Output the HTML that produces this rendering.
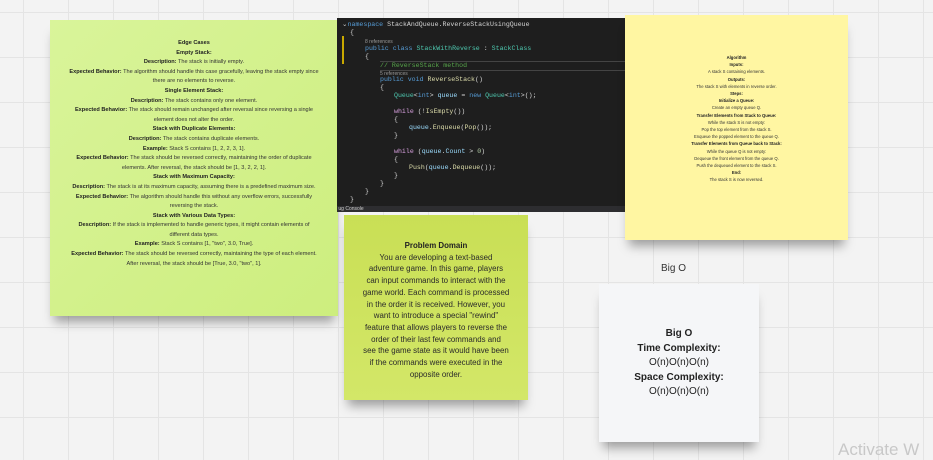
<!DOCTYPE html>
<html><head><meta charset="utf-8"><style>
body{margin:0;width:933px;height:454px;overflow:hidden;position:relative;font-family:"Liberation Sans","DejaVu Sans",sans-serif;
background-color:#f3f3f3;
background-image:linear-gradient(#e4e4e4 1px,transparent 1px),linear-gradient(90deg,#e4e4e4 1px,transparent 1px);
background-size:45px 45px;background-position:23px 12px;}
.note{position:absolute;box-shadow:0 10px 10px -4px rgba(0,0,0,.35);text-align:center;color:#333;}
.g{left:50px;top:20px;width:288px;height:296px;background:linear-gradient(135deg,#d9f49a,#cdee7e);font-size:5.6px;line-height:9.6px;}
.g .in{position:absolute;top:19px;left:19px;right:19px;}
b{color:#222}
.code{position:absolute;left:337px;top:18px;width:288px;height:194px;background:#1e1e1e;font-family:"Liberation Mono",monospace;font-size:6.6px;line-height:8.1px;color:#9cdcfe;white-space:pre;}
.code .l{position:absolute;left:0;}
.k{color:#569cd6}.t{color:#4ec9b0}.c{color:#57a64a}.p{color:#d8a0df}.f{color:#dcdcaa}.w{color:#d4d4d4}.n{color:#b5cea8}.r{color:#999;font-size:5px;font-family:"Liberation Sans",sans-serif}
.y{left:625px;top:15px;width:223px;height:225px;background:#fff6a2;font-size:4.2px;line-height:7.2px;}
.y .in{position:absolute;top:39px;left:0;right:0}
.pd{left:344px;top:215px;width:184px;height:185px;background:linear-gradient(180deg,#c9df55,#d3e768);font-size:7.9px;line-height:11.7px;color:#2a2a2a;white-space:nowrap}
.bo{left:599px;top:284px;width:160px;height:158px;background:#f5f6f8;font-size:10px;line-height:14.5px;color:#222}
</style></head><body>
<div class="note g"><div class="in">
<b>Edge Cases</b><br><b>Empty Stack:</b><br><b>Description:</b> The stack is initially empty.<br><b>Expected Behavior:</b> The algorithm should handle this case gracefully, leaving the stack empty since there are no elements to reverse.<br><b>Single Element Stack:</b><br><b>Description:</b> The stack contains only one element.<br><b>Expected Behavior:</b> The stack should remain unchanged after reversal since reversing a single element does not alter the order.<br><b>Stack with Duplicate Elements:</b><br><b>Description:</b> The stack contains duplicate elements.<br><b>Example:</b> Stack S contains [1, 2, 2, 3, 1].<br><b>Expected Behavior:</b> The stack should be reversed correctly, maintaining the order of duplicate elements. After reversal, the stack should be [1, 3, 2, 2, 1].<br><b>Stack with Maximum Capacity:</b><br><b>Description:</b> The stack is at its maximum capacity, assuming there is a predefined maximum size.<br><b>Expected Behavior:</b> The algorithm should handle this without any overflow errors, successfully reversing the stack.<br><b>Stack with Various Data Types:</b><br><b>Description:</b> If the stack is implemented to handle generic types, it might contain elements of different data types.<br><b>Example:</b> Stack S contains [1, "two", 3.0, True].<br><b>Expected Behavior:</b> The stack should be reversed correctly, maintaining the type of each element. After reversal, the stack should be [True, 3.0, "two", 1].
</div></div>
<div class="code">
<div class="l" style="top:3px;left:5px"><span class="w">⌄</span><span class="k">namespace</span> <span class="w">StackAndQueue.ReverseStackUsingQueue</span></div>
<div class="l w" style="top:11px;left:13px">{</div>
<div class="l r" style="top:20px;left:28px">8 references</div>
<div class="l" style="top:27px;left:28px"><span class="k">public class</span> <span class="t">StackWithReverse</span> <span class="w">:</span> <span class="t">StackClass</span></div>
<div class="l w" style="top:35px;left:28px">{</div>
<div class="l c" style="top:43px;left:43px;width:245px;border:1px solid #444;border-left:none;border-right:none">// ReverseStack method</div>
<div class="l r" style="top:52px;left:43px">5 references</div>
<div class="l" style="top:58px;left:43px"><span class="k">public void</span> <span class="f">ReverseStack</span><span class="w">()</span></div>
<div class="l w" style="top:66px;left:43px">{</div>
<div class="l" style="top:74px;left:57px"><span class="t">Queue</span><span class="w">&lt;</span><span class="k">int</span><span class="w">&gt;</span> queue <span class="w">=</span> <span class="k">new</span> <span class="t">Queue</span><span class="w">&lt;</span><span class="k">int</span><span class="w">&gt;();</span></div>
<div class="l" style="top:90px;left:57px"><span class="p">while</span> <span class="w">(!</span><span class="f">IsEmpty</span><span class="w">())</span></div>
<div class="l w" style="top:98px;left:57px">{</div>
<div class="l" style="top:106px;left:72px">queue<span class="w">.</span><span class="f">Enqueue</span><span class="w">(</span><span class="f">Pop</span><span class="w">());</span></div>
<div class="l w" style="top:114px;left:57px">}</div>
<div class="l" style="top:130px;left:57px"><span class="p">while</span> <span class="w">(</span>queue<span class="w">.</span>Count <span class="w">&gt;</span> <span class="n">0</span><span class="w">)</span></div>
<div class="l w" style="top:138px;left:57px">{</div>
<div class="l" style="top:146px;left:72px"><span class="f">Push</span><span class="w">(</span>queue<span class="w">.</span><span class="f">Dequeue</span><span class="w">());</span></div>
<div class="l w" style="top:154px;left:57px">}</div>
<div class="l w" style="top:162px;left:43px">}</div>
<div class="l w" style="top:170px;left:28px">}</div>
<div class="l w" style="top:178px;left:13px">}</div>
<div style="position:absolute;left:5px;top:18px;width:2px;height:28px;background:#c8a800"></div>
<div style="position:absolute;left:0;top:188px;width:288px;height:6px;background:#2d2d30;font-family:'Liberation Sans',sans-serif;font-size:5px;line-height:6px;color:#ccc">&nbsp;ug Console</div>
</div>
<div class="note y"><div class="in">
<b>Algorithm</b><br><b>Inputs:</b><br>A stack S containing elements.<br><b>Outputs:</b><br>The stack S with elements in reverse order.<br><b>Steps:</b><br><b>Initialize a Queue:</b><br>Create an empty queue Q.<br><b>Transfer Elements from Stack to Queue:</b><br>While the stack S is not empty:<br>Pop the top element from the stack S.<br>Enqueue the popped element to the queue Q.<br><b>Transfer Elements from Queue back to Stack:</b><br>While the queue Q is not empty:<br>Dequeue the front element from the queue Q.<br>Push the dequeued element to the stack S.<br><b>End:</b><br>The stack S is now reversed.
</div></div>
<div class="note pd"><div style="position:absolute;top:25px;left:0;right:0">
<b>Problem Domain</b><br>You are developing a text-based<br>adventure game. In this game, players<br>can input commands to interact with the<br>game world. Each command is processed<br>in the order it is received. However, you<br>want to introduce a special "rewind"<br>feature that allows players to reverse the<br>order of their last few commands and<br>see the game state as it would have been<br>if the commands were executed in the<br>opposite order.
</div></div>
<div style="position:absolute;left:661px;top:263px;font-size:10px;color:#333">Big O</div>
<div class="note bo"><div style="position:absolute;top:43px;left:0;right:0">
<b>Big O</b><br><b>Time Complexity:</b><br>O(n)O(n)O(n)<br><b>Space Complexity:</b><br>O(n)O(n)O(n)
</div></div>
<div style="position:absolute;left:838px;top:440px;font-size:17px;color:#c8c8c8">Activate W</div>
</body></html>
